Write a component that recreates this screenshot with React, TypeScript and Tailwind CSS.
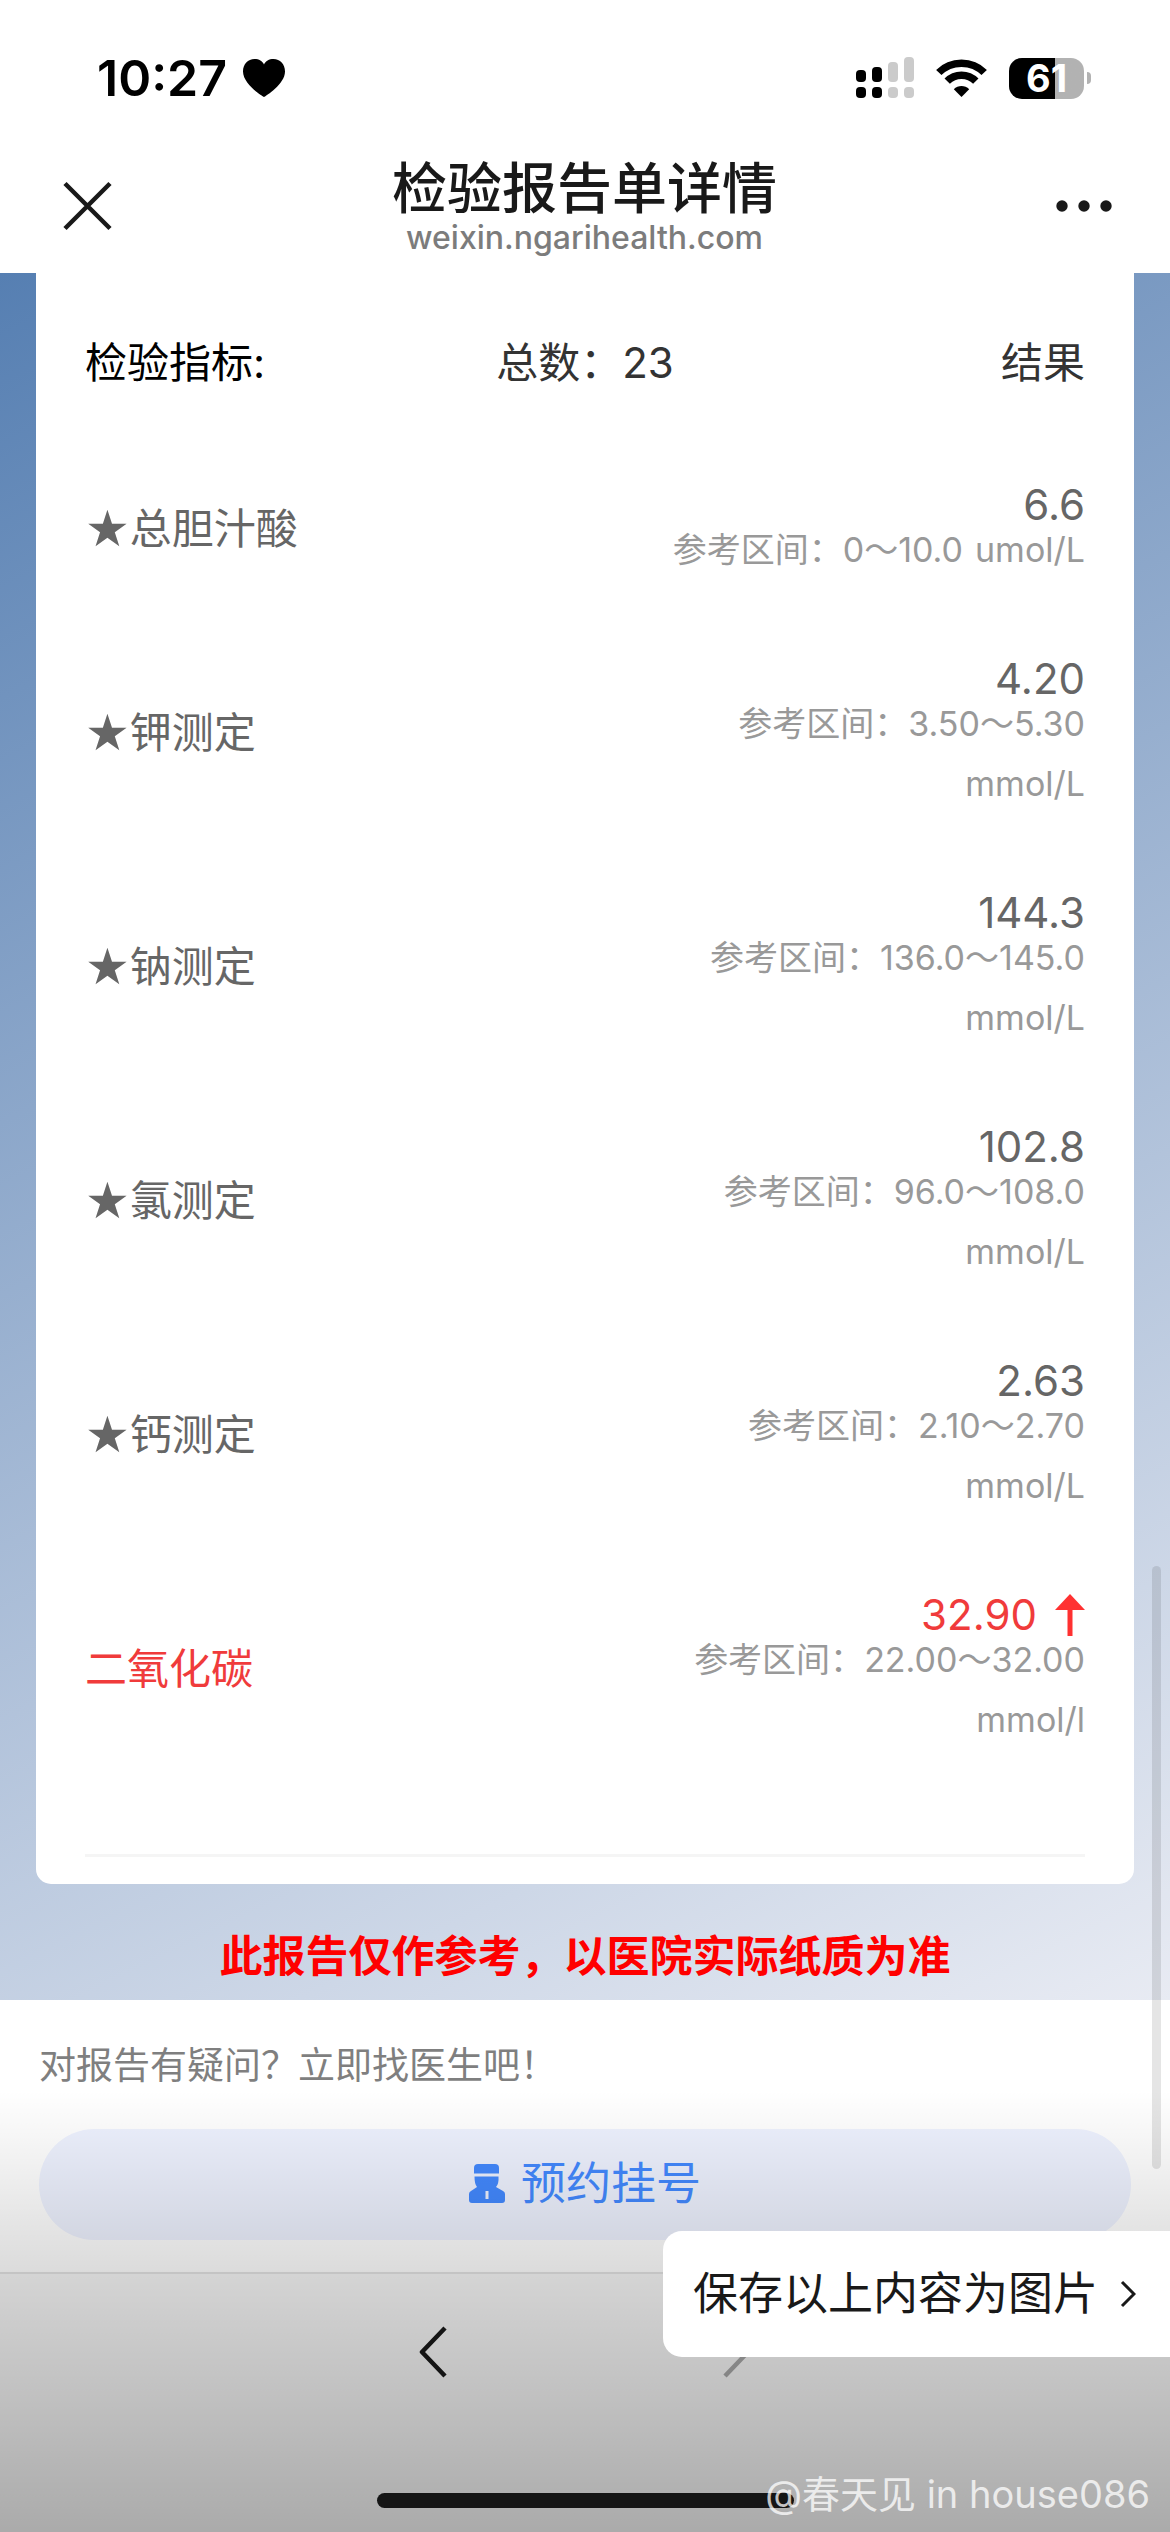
type Item = {
  name: string
  value: string
  range: string
  unit: string
  starred?: boolean
  high?: boolean
}

const items: Item[] = [
  { name: '总胆汁酸', value: '6.6', range: '0～10.0', unit: 'umol/L', starred: true },
  { name: '钾测定', value: '4.20', range: '3.50～5.30', unit: 'mmol/L', starred: true },
  { name: '钠测定', value: '144.3', range: '136.0～145.0', unit: 'mmol/L', starred: true },
  { name: '氯测定', value: '102.8', range: '96.0～108.0', unit: 'mmol/L', starred: true },
  { name: '钙测定', value: '2.63', range: '2.10～2.70', unit: 'mmol/L', starred: true },
  { name: '二氧化碳', value: '32.90', range: '22.00～32.00', unit: 'mmol/l', high: true },
]

function StatusBar() {
  return (
    <div className="flex h-[139px] items-center justify-between pt-[17px] pr-[79px] pl-[97px]">
      <div className="flex items-center gap-4 text-black">
        <span className="text-[50px] leading-none font-semibold">10:27</span>
        <svg width="42" height="38" viewBox="0 0 42 38" fill="currentColor" aria-hidden="true">
          <path d="M21 38C19 37 0 25 0 12.500C0 5 5 0 11.500 0C16 0 19.500 2 21 5.500C22.500 2 26 0 30.500 0C37 0 42 5 42 12.500C42 25 23 37 21 38Z" />
        </svg>
      </div>
      <div className="flex items-center">
        <svg width="58" height="42" viewBox="0 0 58 42" aria-hidden="true">
          <g fill="#000">
            <rect x="0" y="13" width="10" height="12" rx="4" />
            <rect x="16" y="10" width="10" height="15" rx="4" />
            <rect x="0" y="30" width="10" height="11" rx="4" />
            <rect x="16" y="30" width="10" height="11" rx="4" />
          </g>
          <g fill="#cbcbcb">
            <rect x="32" y="5" width="10" height="20" rx="4" />
            <rect x="48" y="0" width="10" height="25" rx="4" />
            <rect x="32" y="30" width="10" height="11" rx="4" />
            <rect x="48" y="30" width="10" height="11" rx="4" />
          </g>
        </svg>
        <svg className="ml-[22px]" width="51" height="38" viewBox="0 0 51 38" aria-hidden="true">
          <g fill="none" stroke="#000" strokeWidth="7.500">
            <path d="M2.800 13.500C15 1 36 1 48.200 13.500" />
            <path d="M11.200 22.200C19 14.200 32 14.200 39.800 22.200" />
          </g>
          <path d="M25.500 38L17.800 30.300C22 26 29 26 33.200 30.300Z" fill="#000" />
        </svg>
        <div className="ml-[22px] flex items-center gap-[3px]">
          <div className="flex h-[41px] w-[75px] items-center justify-center rounded-[13px] bg-linear-to-r from-black from-61% to-[#b2b2b2] to-61% text-[38px] leading-none font-bold text-white">
            61
          </div>
          <div className="h-3 w-1 rounded-r-full bg-[#b2b2b2]" />
        </div>
      </div>
    </div>
  )
}

function NavBar() {
  return (
    <header className="flex h-[134px] items-center justify-between px-[58px] text-[#191919]">
      <button aria-label="关闭" className="pl-1">
        <svg width="51" height="50" viewBox="0 0 51 50" fill="none" stroke="currentColor" strokeWidth="4.500">
          <path d="M3 2.500L48 47.500M48 2.500L3 47.500" />
        </svg>
      </button>
      <div className="pt-2 text-center">
        <h1 className="text-[55px] leading-[56px] font-medium">检验报告单详情</h1>
        <p className="text-[32px] leading-[44px] font-medium text-[#7c7c7c]">weixin.ngarihealth.com</p>
      </div>
      <button aria-label="更多">
        <svg width="56" height="12" viewBox="0 0 56 12" fill="currentColor">
          <circle cx="6" cy="6" r="5.700" />
          <circle cx="28" cy="6" r="5.700" />
          <circle cx="50" cy="6" r="5.700" />
        </svg>
      </button>
    </header>
  )
}

function ItemRow({ item }: { item: Item }) {
  return (
    <tr>
      <th
        scope="row"
        className={`pb-3 text-left text-[42px] leading-[60px] font-normal ${item.high ? 'text-[#f03b3b]' : 'text-[#666]'}`}
      >
        <span className="flex items-center">
          {item.starred && <span className="font-['DejaVu_Sans',sans-serif] text-[50px] leading-[60px]">★</span>}
          {item.name}
        </span>
      </th>
      <td colSpan={2} className="py-[42px]">
        <div
          className={`flex h-[30px] items-center justify-end gap-[18px] text-[42px] leading-[30px] ${item.high ? 'text-[#f03b3b]' : 'text-[#666]'}`}
        >
          {item.value}
          {item.high && (
            <svg width="30" height="42" viewBox="0 0 30 42" fill="#ff3131" role="img" aria-label="偏高">
              <path d="M15 0L30 16H17.500V42H12.500V16H0Z" />
            </svg>
          )}
        </div>
        <div className="ml-auto flex w-[440px] flex-wrap justify-end gap-x-3 text-[34px] leading-[60px] text-[#999]">
          <span className="whitespace-nowrap">参考区间：{item.range}</span>
          <span>{item.unit}</span>
        </div>
      </td>
    </tr>
  )
}

export default function App() {
  return (
    <div className="relative flex min-h-screen flex-col overflow-hidden bg-white font-['Inter','Noto_Sans_CJK_SC',sans-serif]">
      <StatusBar />
      <NavBar />

      <main className="bg-[linear-gradient(154deg,#567fb2,#e8ebf3)] px-9">
        <section className="rounded-b-[15px] bg-white px-[49px] pb-[27px]">
          <table className="w-full table-fixed border-b-[3px] border-[#f5f5f5]">
            <thead>
              <tr className="h-[175px] text-[42px] text-[#333]">
                <th className="pt-1 text-left font-normal text-black">检验指标:</th>
                <th className="pt-1 text-center font-normal">总数：23</th>
                <th className="pt-1 text-right font-normal">结果</th>
              </tr>
            </thead>
            <tbody>
              {items.map((item) => (
                <ItemRow key={item.name} item={item} />
              ))}
            </tbody>
            <tfoot>
              <tr className="h-[63px]">
                <td colSpan={3} />
              </tr>
            </tfoot>
          </table>
        </section>
        <p className="pt-[42px] pb-[14px] text-center text-[43px] leading-[60px] font-bold text-[#f00]">
          此报告仅作参考，以医院实际纸质为准
        </p>
      </main>

      <section className="px-[39px] pt-9 pb-8 text-[#7f7f7f]">
        <p className="text-[37px] leading-[60px]">对报告有疑问？立即找医生吧！</p>
        <button className="mt-[33px] flex h-[111px] w-full items-center justify-center gap-4 rounded-full bg-[#eef2ff] text-[45px] text-[#4389ff]">
          <svg width="36" height="40" viewBox="0 0 36 40" fill="currentColor" fillRule="evenodd" aria-hidden="true">
            <path d="M5 9.500V4Q5 0 9 0H26Q30 0 30 4V9.500Z" />
            <path d="M5.500 12.500H29.500Q30 20 27 23L34 27Q36 28 36 30V36Q36 39 33 39H3Q0 39 0 36V30Q0 28 2 27L8 23Q5.500 20 5.500 12.500ZM16.500 27V35H19.500V27Z" />
          </svg>
          预约挂号
        </button>
      </section>

      <footer className="relative flex flex-1 flex-col items-center justify-between border-t-2 border-[#e4e4e4] bg-[#f7f7f7] pt-[52px] pb-6">
        <nav className="flex gap-[276px] text-[#191919]">
          <button aria-label="后退">
            <svg width="28" height="52" viewBox="0 0 28 52" fill="none" stroke="currentColor" strokeWidth="4.500">
              <path d="M26 2L3 26L26 50" strokeLinejoin="round" />
            </svg>
          </button>
          <button aria-label="前进" className="text-[#a8a8a8]">
            <svg width="28" height="52" viewBox="0 0 28 52" fill="none" stroke="currentColor" strokeWidth="4.500">
              <path d="M2 2L25 26L2 50" strokeLinejoin="round" />
            </svg>
          </button>
        </nav>
        <div className="z-10 h-[15px] w-[417px] rounded-full bg-[#151515]" />
        <button className="absolute -top-[43px] right-0 z-20 flex h-[126px] items-center gap-[22px] rounded-l-[19px] bg-white pr-[34px] pl-[30px] text-[45px] text-[#191919]">
          保存以上内容为图片
          <svg width="16" height="28" viewBox="0 0 16 28" fill="none" stroke="currentColor" strokeWidth="3">
            <path d="M2 2L14 14L2 26" />
          </svg>
        </button>
        <span className="absolute right-5 bottom-2 z-20 text-[38px] leading-[60px] text-white/75">
          @春天见 in house086
        </span>
      </footer>

      {/* scroll thumb */}
      <div className="absolute top-[1566px] right-[9px] h-[603px] w-[9px] rounded-full bg-black/10" />
      {/* bottom shade */}
      <div className="pointer-events-none absolute inset-x-0 bottom-0 h-[442px] bg-linear-to-b from-transparent via-black/14 via-41% to-black/31" />
    </div>
  )
}
